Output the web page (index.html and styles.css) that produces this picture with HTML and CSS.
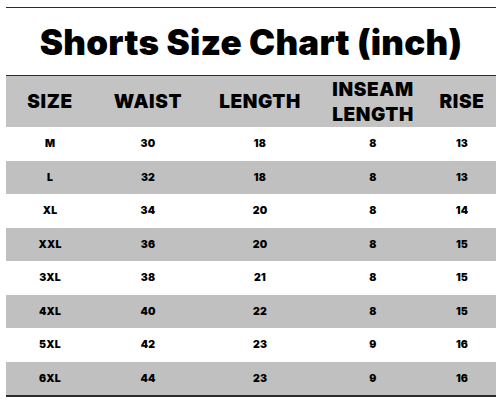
FILE: index.html
```html
<!DOCTYPE html>
<html>
<head>
<meta charset="utf-8">
<link rel="stylesheet" href="styles.css">
</head>
<body>
<div class="chart">
  <div class="rule"></div>
  <h1 class="title">Shorts Size Chart (inch)</h1>
  <div class="grid head">
    <div class="cell">SIZE</div>
    <div class="cell">WAIST</div>
    <div class="cell">LENGTH</div>
    <div class="cell">INSEAM<br>LENGTH</div>
    <div class="cell">RISE</div>
  </div>
  <div class="grid row"><div class="cell">M</div><div class="cell">30</div><div class="cell">18</div><div class="cell">8</div><div class="cell">13</div></div>
  <div class="grid row alt"><div class="cell">L</div><div class="cell">32</div><div class="cell">18</div><div class="cell">8</div><div class="cell">13</div></div>
  <div class="grid row"><div class="cell">XL</div><div class="cell">34</div><div class="cell">20</div><div class="cell">8</div><div class="cell">14</div></div>
  <div class="grid row alt"><div class="cell">XXL</div><div class="cell">36</div><div class="cell">20</div><div class="cell">8</div><div class="cell">15</div></div>
  <div class="grid row"><div class="cell">3XL</div><div class="cell">38</div><div class="cell">21</div><div class="cell">8</div><div class="cell">15</div></div>
  <div class="grid row alt"><div class="cell">4XL</div><div class="cell">40</div><div class="cell">22</div><div class="cell">8</div><div class="cell">15</div></div>
  <div class="grid row"><div class="cell">5XL</div><div class="cell">42</div><div class="cell">23</div><div class="cell">9</div><div class="cell">16</div></div>
  <div class="grid row alt last"><div class="cell">6XL</div><div class="cell">44</div><div class="cell">23</div><div class="cell">9</div><div class="cell">16</div></div>
</div>
</body>
</html>
```

FILE: styles.css
```css
html, body {
  margin: 0;
  padding: 0;
  background: #ffffff;
}
.chart {
  width: 490px;
  margin-left: 6px;
  padding-top: 7px;
  font-family: "Inter", "DejaVu Sans", sans-serif;
  color: #000;
}
.rule {
  height: 1px;
  background: #2b2b2b;
}
.title {
  margin: 0;
  height: 67px;
  display: flex;
  align-items: center;
  justify-content: center;
  font-size: 35px;
  font-weight: 900;
  letter-spacing: 0.2px;
  line-height: 1;
  padding-top: 2px;
  box-sizing: border-box;
}
.grid {
  display: grid;
  grid-template-columns: 88px 108px 116px 110px 68px;
}
.cell {
  display: flex;
  align-items: center;
  justify-content: center;
  text-align: center;
}
.head {
  border-top: 1px solid #2b2b2b;
  background: #c3c3c3;
  height: 51px;
  font-size: 19px;
  font-weight: 900;
  letter-spacing: 0.6px;
  line-height: 25px;
}
.row {
  height: 33.5px;
  font-size: 10.5px;
  font-weight: 900;
  letter-spacing: 0.2px;
  background: #ffffff;
}
.row.alt {
  background: #c0c0c0;
}
.row.last {
  border-bottom: 2px solid #2b2b2b;
}
```
